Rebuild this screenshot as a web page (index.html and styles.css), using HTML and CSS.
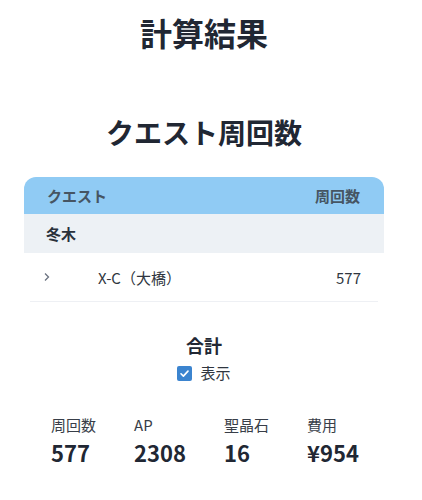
FILE: index.html
```html
<!DOCTYPE html>
<html lang="ja">
<head>
<meta charset="utf-8">
<link rel="stylesheet" href="styles.css">
</head>
<body>
<main class="page">
  <h1 class="title">計算結果</h1>
  <h2 class="subtitle">クエスト周回数</h2>
  <div class="table">
    <div class="thead">
      <span>クエスト</span>
      <span>周回数</span>
    </div>
    <div class="group">冬木</div>
    <div class="row">
      <span class="chev"><svg width="8" height="10" viewBox="0 0 8 10"><path d="M2 1.5 L5.5 5 L2 8.5" fill="none" stroke="#6b7380" stroke-width="1.3"/></svg></span>
      <span class="quest">X-C（大橋）</span>
      <span class="count">577</span>
    </div>
  </div>
  <h3 class="total">合計</h3>
  <label class="check">
    <span class="box"><svg width="11" height="11" viewBox="0 0 12 12"><path d="M2.2 6.3 L4.8 8.8 L9.8 3.4" fill="none" stroke="#fff" stroke-width="1.8" stroke-linecap="round" stroke-linejoin="round"/></svg></span>
    <span>表示</span>
  </label>
  <div class="stats">
    <div class="stat"><div class="label">周回数</div><div class="value">577</div></div>
    <div class="stat"><div class="label">AP</div><div class="value">2308</div></div>
    <div class="stat"><div class="label">聖晶石</div><div class="value">16</div></div>
    <div class="stat"><div class="label">費用</div><div class="value">¥954</div></div>
  </div>
</main>
</body>
</html>
```
FILE: styles.css
```css
* { box-sizing: border-box; }
body {
  margin: 0;
  font-family: "Noto Sans CJK JP", "Noto Sans", sans-serif;
  color: #212733;
  background: #fff;
}
.page {
  width: 360px;
  margin-left: 24px;
  display: flex;
  flex-direction: column;
  align-items: center;
}
.title {
  margin: 8px 0 0;
  font-size: 32px;
  line-height: 48px;
  font-weight: 700;
}
.subtitle {
  margin: 55px 0 0;
  font-size: 28px;
  line-height: 42px;
  font-weight: 700;
}
.table {
  align-self: stretch;
  margin-top: 24px;
}
.thead {
  display: flex;
  justify-content: space-between;
  height: 37px;
  align-items: center;
  padding: 0 24px 0 23px;
  background: #90cbf4;
  border-radius: 12px 12px 0 0;
  font-size: 15px;
  font-weight: 700;
  color: #465563;
}
.group {
  height: 39px;
  display: flex;
  align-items: center;
  padding-left: 22px;
  background: #edf1f5;
  font-size: 15px;
  font-weight: 700;
  color: #2a313b;
}
.row {
  height: 49px;
  display: flex;
  align-items: center;
  font-size: 15px;
  color: #2f3640;
  border-bottom: 1px solid #eef0f4;
  margin: 0 6px;
  padding-left: 13px;
  padding-right: 17px;
}
.chev {
  width: 55px;
  display: flex;
  align-items: center;
}
.quest { flex: 1; }
.total {
  margin: 30px 0 0;
  font-size: 18px;
  line-height: 27px;
  font-weight: 700;
}
.check {
  display: flex;
  align-items: center;
  gap: 8px;
  font-size: 15px;
  line-height: 22px;
  margin-top: 3px;
  color: #2f3640;
}
.box {
  width: 15px;
  height: 15px;
  border-radius: 2px;
  background: #3b84cf;
  display: flex;
  align-items: center;
  justify-content: center;
}
.stats {
  align-self: stretch;
  display: flex;
  gap: 38px;
  padding-left: 27px;
  margin-top: 30px;
}
.label {
  font-size: 15px;
  line-height: 22px;
  color: #383e48;
}
.value {
  font-size: 22px;
  line-height: 32px;
  font-weight: 700;
}
```
